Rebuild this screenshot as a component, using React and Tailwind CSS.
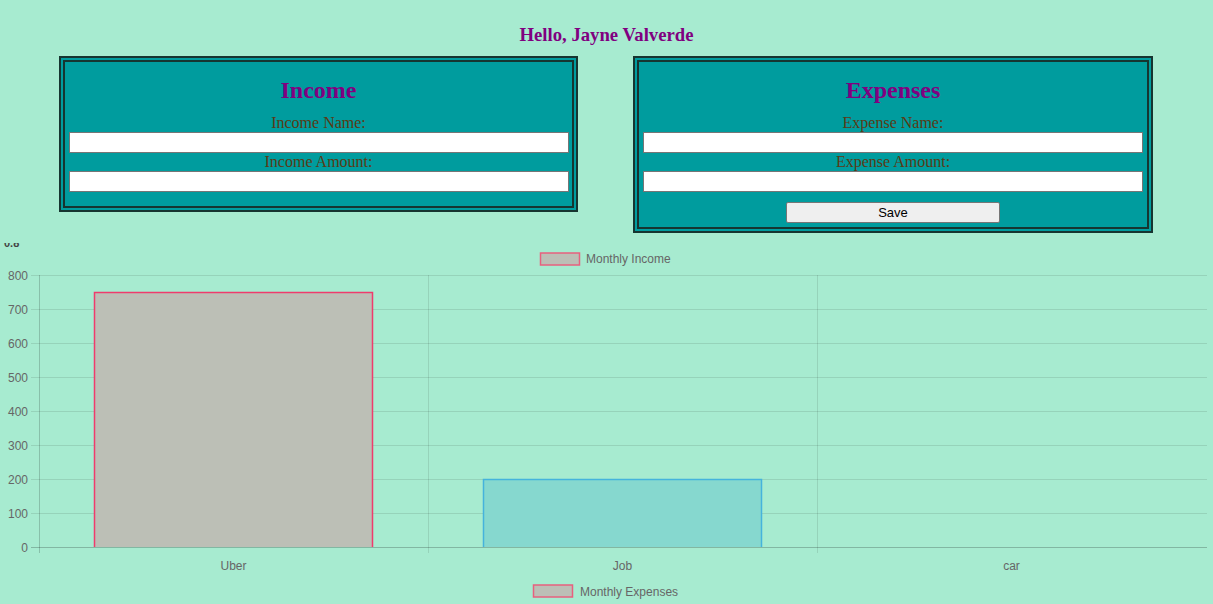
import React from "react";

const serif = { fontFamily: '"Liberation Serif", "Times New Roman", serif' };
const sans = '"Liberation Sans", Arial, Helvetica, sans-serif';

function Field({ label }) {
  return (
    <>
      <div className="text-[16px] leading-[18px] text-[#5a3a14]">{label}</div>
      <input
        type="text"
        className="block mx-auto w-[500px] h-[21px] bg-white border border-[#767676] outline-none"
      />
    </>
  );
}

function Panel({ title, nameLabel, amountLabel, children, className }) {
  return (
    <div
      className={`w-[519px] border-[6px] border-double border-[#163530] bg-[#009c9e] pt-[14px] text-center ${className}`}
    >
      <h2 className="text-[24px] leading-[28px] font-bold text-[#800080] mb-[10px]">
        {title}
      </h2>
      <Field label={nameLabel} />
      <Field label={amountLabel} />
      {children}
    </div>
  );
}

// page y -> svg y (svg starts at page y 236)
const Y0 = 236;
const yv = (v) => 547 - v * 0.34 - Y0;

function Chart() {
  const ticks = [0, 100, 200, 300, 400, 500, 600, 700, 800];
  const cols = [39, 428, 817];
  const labels = [
    { t: "Uber", x: 233.5 },
    { t: "Job", x: 622.5 },
    { t: "car", x: 1011.5 },
  ];
  return (
    <svg width="1213" height="380" className="block" style={{ fontFamily: sans }}>
      <defs>
        <clipPath id="topclip">
          <rect x="0" y="7" width="40" height="10" />
        </clipPath>
      </defs>
      <text x="4" y="11" fontSize="11" fill="#444" fontWeight="bold" clipPath="url(#topclip)">
        0.8
      </text>

      {/* legend 1 */}
      <rect x="540.5" y={253 - Y0} width="39" height="12" fill="#bcbfb6" stroke="#e8607e" strokeWidth="1.5" />
      <text x="586" y={262.5 - Y0} fontSize="12" fill="#666">
        Monthly Income
      </text>

      {/* grid */}
      {ticks.map((v) => (
        <g key={v}>
          <line
            x1="31"
            x2="1207"
            y1={yv(v) + 0.5}
            y2={yv(v) + 0.5}
            stroke={v === 0 ? "rgba(0,0,0,0.22)" : "rgba(0,0,0,0.1)"}
            strokeWidth="1"
          />
          <text x="28" y={yv(v) + 4.5} fontSize="12" fill="#666" textAnchor="end">
            {v}
          </text>
        </g>
      ))}
      {cols.map((x, i) => (
        <line
          key={x}
          x1={x + 0.5}
          x2={x + 0.5}
          y1={275 - Y0}
          y2={553 - Y0}
          stroke={i === 0 ? "rgba(0,0,0,0.18)" : "rgba(0,0,0,0.1)"}
          strokeWidth="1"
        />
      ))}

      {/* bars */}
      <rect x="94" y={yv(750)} width="279" height={750 * 0.34} fill="#bcbfb6" />
      <path
        d={`M94.5 ${547 - Y0} V${yv(750) + 0.5} H372.5 V${547 - Y0}`}
        fill="none"
        stroke="#ef3b6c"
        strokeWidth="1.5"
      />
      <rect x="483" y={yv(200)} width="279" height={200 * 0.34} fill="#86d8cf" />
      <path
        d={`M483.5 ${547 - Y0} V${yv(200) + 0.5} H761.5 V${547 - Y0}`}
        fill="none"
        stroke="#45b3dc"
        strokeWidth="1.5"
      />

      {labels.map((l) => (
        <text key={l.t} x={l.x} y={570 - Y0} fontSize="12" fill="#666" textAnchor="middle">
          {l.t}
        </text>
      ))}

      {/* legend 2 */}
      <rect x="533.5" y={585 - Y0} width="39" height="12" fill="#bcbfb6" stroke="#e8607e" strokeWidth="1.5" />
      <text x="580" y={595.5 - Y0} fontSize="12" fill="#666">
        Monthly Expenses
      </text>

      <text x="4" y={614 - Y0} fontSize="12" fill="#666">
        1,400
      </text>
    </svg>
  );
}

export default function App() {
  return (
    <div className="min-h-screen bg-[#a7ebd0] overflow-hidden" style={serif}>
      <h3 className="pt-[24px] text-center text-[18.72px] leading-[21px] font-bold text-[#800080]">
        Hello, Jayne Valverde
      </h3>

      <div className="flex items-start pl-[59px] gap-[55px] mt-[11px]">
        <Panel
          title="Income"
          nameLabel="Income Name:"
          amountLabel="Income Amount:"
          className="pb-[14px]"
        />
        <Panel
          title="Expenses"
          nameLabel="Expense Name:"
          amountLabel="Expense Amount:"
          className="w-[520px] pb-[4px]"
        >
          <button
            className="block mx-auto mt-[10px] w-[214px] h-[21px] bg-[#efefef] border border-[#767676] rounded-[2px] text-[13px] text-black"
            style={{ fontFamily: sans }}
          >
            Save
          </button>
        </Panel>
      </div>

      <div className="mt-[3px]">
        <Chart />
      </div>
    </div>
  );
}
